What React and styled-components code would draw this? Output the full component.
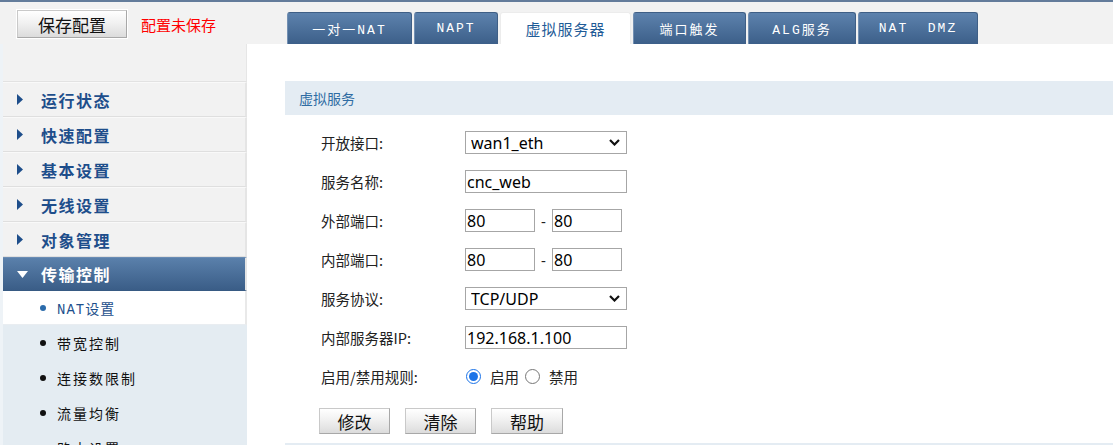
import React from "react";
import styled, { createGlobalStyle } from "styled-components";

const GlobalStyle = createGlobalStyle`
  html, body {
    margin: 0;
    padding: 0;
    background: #ffffff;
    font-family: "Noto Sans", "Noto Sans CJK SC", sans-serif;
    overflow: hidden;
  }
`;

const CJK = `"Noto Sans CJK SC", "Noto Sans", sans-serif`;
const MONO = `"Liberation Mono", "Noto Sans CJK SC", monospace`;

const Page = styled.div`
  width: 1113px;
  height: 445px;
  border-top: 2px solid #637c9b;
  box-sizing: border-box;
  overflow: hidden;
`;

const Header = styled.div`
  display: flex;
  align-items: stretch;
  height: 42px;
  background: #f2f2f2;
`;

const SaveArea = styled.div`
  width: 247px;
  display: flex;
  align-items: center;
  padding: 2px 0 0 17px;
  box-sizing: border-box;
  gap: 14px;
`;

const PushButton = styled.button`
  width: ${(p) => p.$w}px;
  height: ${(p) => p.$h}px;
  padding: 0;
  font-family: ${CJK};
  font-size: 17px;
  line-height: 1;
  color: #111;
  background: linear-gradient(#ffffff, #f1f1f1 45%, #dcdcdc);
  border: 1px solid #c9c9c9;
  border-right-color: #a8a8a8;
  border-bottom-color: #a8a8a8;
  box-shadow: 0 0 0 1px #ffffff;
  cursor: pointer;
`;

const Unsaved = styled.span`
  font-family: ${CJK};
  font-size: 15px;
  color: #ff0000;
`;

const Tabs = styled.div`
  display: flex;
  align-items: flex-end;
  gap: 2px;
  padding-left: 40px;
`;

const Tab = styled.div`
  width: ${(p) => p.$w}px;
  height: 32px;
  box-sizing: border-box;
  display: flex;
  align-items: center;
  justify-content: center;
  border-radius: 3px 3px 0 0;
  white-space: pre;
  ${(p) =>
    p.$active
      ? `
    background: #ffffff;
    color: #1f5c97;
    font-family: ${CJK};
    font-size: 15px;
    letter-spacing: 1px;
    border: 1px solid #ececec;
    border-bottom: none;
  `
      : `
    background: linear-gradient(#5d82ad, #3c5f89);
    color: #ffffff;
    font-family: ${MONO};
    font-size: 13px;
    letter-spacing: 2px;
    border: 1px solid #3f5f86;
    border-left-color: #7390b3;
    border-bottom: none;
  `}
`;

const Body = styled.div`
  display: flex;
  height: 401px;
`;

const SideCol = styled.div`
  width: 247px;
  flex-shrink: 0;
  padding-left: 3px;
  box-sizing: border-box;
  background: #eef3f7;
  display: flex;
  flex-direction: column;
  overflow: hidden;
`;

const SideTop = styled.div`
  height: 37px;
  flex-shrink: 0;
  background: #f2f2f2;
  border-bottom: 1px solid #e2e2e2;
  border-right: 1px solid #e6e6e6;
`;

const MenuItem = styled.div`
  height: ${(p) => (p.$open ? 34 : 35)}px;
  flex-shrink: 0;
  box-sizing: border-box;
  display: flex;
  align-items: center;
  padding-left: 14px;
  border-top: 1px solid ${(p) => (p.$open ? "#6a8cb4" : "#f9f9f9")};
  border-bottom: 1px solid ${(p) => (p.$open ? "#375a83" : "#dfdfdf")};
  border-right: 2px solid #e5e5e5;
  background: ${(p) => (p.$open ? "linear-gradient(#5a80ab, #3a5d87)" : "#f2f2f2")};
  color: ${(p) => (p.$open ? "#ffffff" : "#1e4e8b")};
  font-family: ${CJK};
  font-size: 16px;
  font-weight: 700;
  letter-spacing: 1.5px;
`;

const Arrow = styled.span`
  width: 24px;
  display: flex;
  align-items: center;
  svg {
    display: block;
  }
`;

const SubList = styled.div`
  flex: 1 0 auto;
  background: #e4ecf2;
`;

const SubItem = styled.div`
  height: ${(p) => (p.$active ? 34 : 35)}px;
  box-sizing: border-box;
  display: flex;
  align-items: center;
  padding-left: 37px;
  gap: 11px;
  font-family: ${(p) => (p.$active ? MONO : CJK)};
  font-size: 14px;
  letter-spacing: ${(p) => (p.$active ? "1px" : "2px")};
  color: ${(p) => (p.$active ? "#1d4f8c" : "#111111")};
  background: ${(p) => (p.$active ? "#ffffff" : "transparent")};
  border-right: ${(p) => (p.$active ? "2px solid #e9e9e9" : "none")};
  border-bottom: ${(p) => (p.$active ? "1px solid #e9edf1" : "none")};
`;

const Bullet = styled.span`
  width: 6px;
  height: 6px;
  border-radius: 50%;
  background: ${(p) => (p.$active ? "#2b6bab" : "#111111")};
`;

const Main = styled.div`
  flex: 1;
  padding: 37px 0 0 38px;
  display: flex;
  flex-direction: column;
`;

const SectionHead = styled.div`
  height: 34px;
  flex-shrink: 0;
  display: flex;
  align-items: center;
  padding-left: 14px;
  background: #e4ecf3;
  color: #2f6ca3;
  font-family: ${CJK};
  font-size: 14px;
`;

const Form = styled.div`
  padding: 8px 0 0 36px;
  display: flex;
  flex-direction: column;
`;

const Row = styled.div`
  height: 39px;
  display: grid;
  grid-template-columns: 144px 1fr;
  align-items: center;
`;

const Label = styled.span`
  font-family: ${CJK};
  font-size: 14.5px;
  color: #222;
`;

const Field = styled.div`
  display: flex;
  align-items: center;
`;

const TextBox = styled.input`
  width: ${(p) => p.$w}px;
  height: 23px;
  box-sizing: border-box;
  padding: 0 1px;
  border: 1px solid #a6a6a6;
  border-radius: 0;
  font-family: "Noto Sans", sans-serif;
  font-size: 16px;
  color: #000;
  outline: none;
`;

const Dash = styled.span`
  width: 17px;
  text-align: center;
  font-size: 15px;
  color: #222;
`;

const SelectWrap = styled.div`
  position: relative;
  width: 162px;
  height: 23px;
`;

const Select = styled.select`
  width: 100%;
  height: 100%;
  appearance: none;
  box-sizing: border-box;
  padding: 0 0 0 5px;
  border: 1px solid #a6a6a6;
  border-radius: 0;
  background: #ffffff;
  font-family: "Noto Sans", sans-serif;
  font-size: 16px;
  color: #000;
  outline: none;
`;

const Chevron = styled.svg`
  position: absolute;
  right: 7px;
  top: 8px;
  pointer-events: none;
`;

const Radio = styled.input`
  width: 15px;
  height: 15px;
  margin: 0 9px 0 1px;
  accent-color: #1a73e8;
`;

const RadioText = styled.span`
  font-family: ${CJK};
  font-size: 14.5px;
  color: #222;
  margin-right: 5px;
`;

const Actions = styled.div`
  display: flex;
  gap: 15px;
  padding: 12px 0 0 34px;
`;

const BottomLine = styled.div`
  margin-top: 9px;
  height: 4px;
  background: #e4ecf3;
`;

const RightTri = () => (
  <svg width="6" height="11" viewBox="0 0 6 11">
    <path d="M0 0 L6 5.5 L0 11 Z" fill="#1e4e8b" />
  </svg>
);

const DownTri = () => (
  <svg width="11" height="7" viewBox="0 0 11 7">
    <path d="M0 0 L11 0 L5.5 7 Z" fill="#ffffff" />
  </svg>
);

const SelectBox = ({ value, options }) => (
  <SelectWrap>
    <Select defaultValue={value}>
      {options.map((o) => (
        <option key={o}>{o}</option>
      ))}
    </Select>
    <Chevron width="11" height="7" viewBox="0 0 11 7">
      <path d="M1 1 L5.5 5.5 L10 1" stroke="#111" strokeWidth="2.2" fill="none" />
    </Chevron>
  </SelectWrap>
);

const tabs = [
  { label: "一对一NAT", w: 125 },
  { label: "NAPT", w: 84 },
  { label: "虚拟服务器", w: 131, active: true },
  { label: "端口触发", w: 113 },
  { label: "ALG服务", w: 108 },
  { label: "NAT  DMZ", w: 120 },
];

const menu = ["运行状态", "快速配置", "基本设置", "无线设置", "对象管理"];
const subs = ["带宽控制", "连接数限制", "流量均衡", "路由设置"];

const App = () => {
  return (
    <>
      <GlobalStyle />
      <Page>
        <Header>
          <SaveArea>
            <PushButton $w={110} $h={28}>保存配置</PushButton>
            <Unsaved>配置未保存</Unsaved>
          </SaveArea>
          <Tabs>
            {tabs.map((t) => (
              <Tab key={t.label} $w={t.w} $active={t.active}>
                {t.label}
              </Tab>
            ))}
          </Tabs>
        </Header>
        <Body>
          <SideCol>
            <SideTop />
            {menu.map((m) => (
              <MenuItem key={m}>
                <Arrow>
                  <RightTri />
                </Arrow>
                {m}
              </MenuItem>
            ))}
            <MenuItem $open>
              <Arrow>
                <DownTri />
              </Arrow>
              传输控制
            </MenuItem>
            <SubList>
              <SubItem $active>
                <Bullet $active />
                NAT设置
              </SubItem>
              {subs.map((s) => (
                <SubItem key={s}>
                  <Bullet />
                  {s}
                </SubItem>
              ))}
            </SubList>
          </SideCol>
          <Main>
            <SectionHead>虚拟服务</SectionHead>
            <Form>
              <Row>
                <Label>开放接口:</Label>
                <Field>
                  <SelectBox value="wan1_eth" options={["wan1_eth", "wan2_eth"]} />
                </Field>
              </Row>
              <Row>
                <Label>服务名称:</Label>
                <Field>
                  <TextBox $w={162} defaultValue="cnc_web" />
                </Field>
              </Row>
              <Row>
                <Label>外部端口:</Label>
                <Field>
                  <TextBox $w={70} defaultValue="80" />
                  <Dash>-</Dash>
                  <TextBox $w={70} defaultValue="80" />
                </Field>
              </Row>
              <Row>
                <Label>内部端口:</Label>
                <Field>
                  <TextBox $w={70} defaultValue="80" />
                  <Dash>-</Dash>
                  <TextBox $w={70} defaultValue="80" />
                </Field>
              </Row>
              <Row>
                <Label>服务协议:</Label>
                <Field>
                  <SelectBox value="TCP/UDP" options={["TCP/UDP", "TCP", "UDP"]} />
                </Field>
              </Row>
              <Row>
                <Label>内部服务器IP:</Label>
                <Field>
                  <TextBox $w={162} defaultValue="192.168.1.100" />
                </Field>
              </Row>
              <Row>
                <Label>启用/禁用规则:</Label>
                <Field>
                  <Radio type="radio" name="rule" defaultChecked />
                  <RadioText>启用</RadioText>
                  <Radio type="radio" name="rule" />
                  <RadioText>禁用</RadioText>
                </Field>
              </Row>
            </Form>
            <Actions>
              <PushButton $w={71} $h={26}>修改</PushButton>
              <PushButton $w={71} $h={26}>清除</PushButton>
              <PushButton $w={72} $h={26}>帮助</PushButton>
            </Actions>
            <BottomLine />
          </Main>
        </Body>
      </Page>
    </>
  );
};

export default App;
